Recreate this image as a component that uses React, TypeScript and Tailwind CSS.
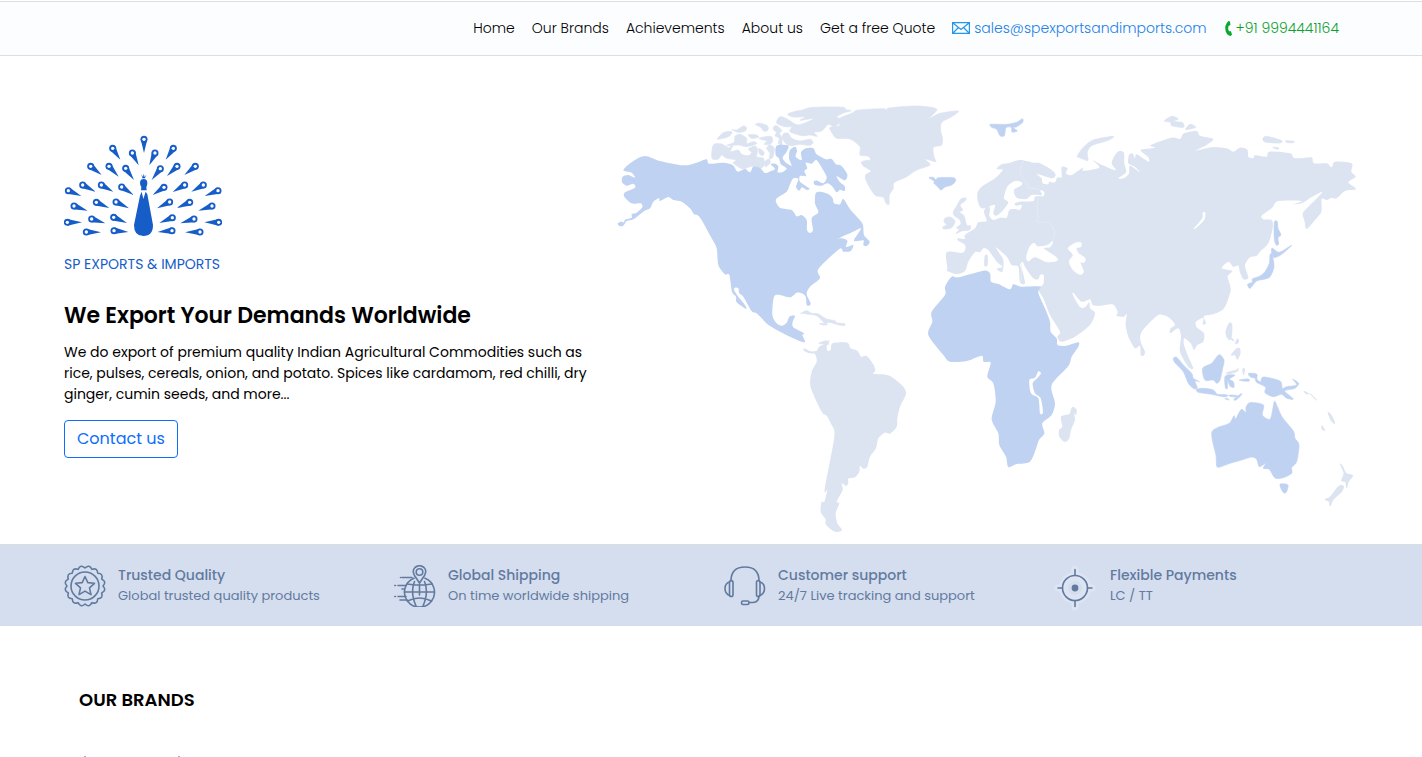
import React from "react";

type Point = [number, number];

const parse = (text: string): Point[] =>
  text
    .trim()
    .split(/\s+/)
    .map((pair) => pair.split(",").map(Number) as Point);

/** Closed Catmull-Rom outline through the given points. */
function outline(text: string, tension = 0.14): string {
  const p = parse(text);
  const n = p.length;
  let d = `M${p[0][0]},${p[0][1]}`;
  for (let i = 0; i < n; i++) {
    const a = p[(i + n - 1) % n];
    const b = p[i];
    const c = p[(i + 1) % n];
    const e = p[(i + 2) % n];
    d += `C${b[0] + (c[0] - a[0]) * tension},${b[1] + (c[1] - a[1]) * tension} ${c[0] - (e[0] - b[0]) * tension},${c[1] - (e[1] - b[1]) * tension} ${c[0]},${c[1]}`;
  }
  return d + "Z";
}

const PALE = "#dce3f1";
const BLUE = "#bfd2f2";

function Land({ fill, shapes, edge = 0 }: { fill: string; shapes: string[]; edge?: number }) {
  return (
    <>
      {shapes.map((s) => (
        <path key={s} d={outline(s)} fill={fill} stroke={fill} strokeWidth={edge} strokeLinejoin="round" />
      ))}
    </>
  );
}

const arctic = [
  "533,57 560,48 575,46 600,38 650,36 700,37 708,44 724,47 700,54 680,66 692,72 688,85 672,95 655,88 635,108 612,112 622,124 600,120 575,122 540,110 545,96 525,95 500,84 510,65 535,74 550,84 565,90 590,82 612,70 570,76 585,66 550,66",
  "310,150 335,147 355,158 368,152 362,170 385,165 395,178 415,182 425,172 415,162 435,153 443,165 440,185 460,190 462,210 450,221 425,214 400,222 380,212 370,203 378,195 350,190 335,180 325,192 306,190",
  "322,132 340,113 365,110 360,122 340,130",
  "365,103 380,105 400,93 410,98 405,108 385,112",
  "375,124 390,118 410,130 410,146 430,140 440,146 410,155 385,150 350,152 372,142",
  "415,119 440,120 445,127 425,130",
  "436,88 450,85 472,92 474,105 462,109 452,97",
  "447,130 482,124 488,137 480,148 462,148 470,138",
  "493,93 505,95 515,108 508,115 516,128 515,150 505,145 508,130 495,122 500,112 490,104",
  "520,116 535,115 545,130 570,138 600,133 609,142 600,151 570,148 545,152 530,148 518,132",
  "470,160 480,150 493,160 488,188 478,190 480,175",
  "447,160 462,172 458,182 448,176",
  "464,200 478,192 480,205 466,215",
  "572,655 590,647 605,655 625,657 650,672 675,677 680,683 703,686 704,691 685,690 660,682 645,684 620,662 595,658 580,655",
  "628,686 645,685 652,689 640,690",
  "755,200 790,195 800,205 772,215 760,212",
  "626,745 650,737 655,748",
];

const northAmerica = [
  "40,225 70,198 105,183 150,198 220,211 260,203 290,193 297,206 340,203 368,210 383,230 405,222 420,232 430,215 450,219 465,234 478,230 495,222 482,208 495,206 505,214 503,232 520,230 530,220 512,207 507,190 497,180 500,152 535,152 530,170 518,188 530,205 545,212 537,190 540,165 556,155 561,168 557,185 575,195 573,172 588,160 610,160 620,178 648,193 665,192 678,208 694,212 712,238 705,256 680,243 690,262 704,274 704,288 690,284 680,292 668,276 653,265 635,272 615,270 611,260 622,257 640,265 650,250 645,235 620,196 605,206 587,203 592,220 583,228 588,243 570,243 570,260 598,280 590,285 576,277 568,287 558,276 565,252 550,250 540,268 530,290 498,313 510,338 545,345 560,364 575,360 590,375 591,405 600,414 609,405 605,370 625,352 615,325 617,295 630,290 655,297 668,310 672,325 690,328 700,312 722,345 757,385 762,420 779,440 770,453 760,450 760,436 732,437 753,400 720,415 690,428 655,447 690,430 712,437 708,456 730,450 722,468 700,470 688,462 625,522 630,550 600,575 590,597 602,625 597,632 590,629 587,605 575,595 560,593 540,607 510,600 492,605 487,660 500,685 515,692 530,683 538,665 555,662 548,680 550,697 582,715 577,720 584,742 540,725 480,693 455,670 440,655 425,648 400,605 388,595 385,580 375,578 372,585 385,605 405,630 408,642 380,622 378,605 366,590 358,540 345,538 325,510 320,460 305,430 275,375 262,360 252,358 240,340 215,320 190,315 175,306 150,318 147,310 130,320 120,340 100,350 70,373 50,378 40,392 28,393 23,385 32,380 42,382 45,374 65,368 65,357 80,353 97,337 92,325 65,325 43,305 45,292 75,278 70,266 50,272 36,262 38,245 55,240 75,248 65,233",
];

const greenland = [
  "90,97 118,92 120,70 155,55 175,45 250,41 262,49 267,39 350,33 410,42 388,70 420,55 475,48 455,65 425,82 422,110 427,125 425,150 400,157 402,185 407,200 375,192 390,210 350,225 320,245 282,263 280,280 268,300 267,328 258,325 250,307 225,300 200,260 197,240 213,228 188,210 213,200 205,184 180,180 180,155 150,132 110,130 95,112",
  "483,312 498,309 495,318 480,330 488,345 478,352 492,362 500,390 512,393 508,405 485,408 468,416 478,402 470,398 483,387 478,373 463,362 460,350 470,333",
  "435,370 450,366 465,378 455,398 432,402 428,396 440,390 432,380",
  "555,483 562,482 562,510 554,512",
];

const northBlue = [
  "387,248 400,247 408,255 415,248 460,248 467,257 455,270 435,276 423,285 413,275 402,265 402,258",
  "572,88 620,88 650,82 667,71 668,82 650,95 640,98 652,108 636,111 634,97 618,98 613,122 600,122 590,103 575,97",
];

const eurasia =
  "-10,222 5,208 30,203 60,195 100,203 120,205 155,225 167,240 155,250 112,237 125,250 128,265 145,268 147,260 165,262 172,247 185,247 185,216 203,220 197,235 215,240 248,218 250,227 298,218 280,197 300,207 347,226 335,205 345,180 358,168 372,173 373,205 378,232 355,250 375,248 387,235 390,212 420,232 405,216 385,205 387,180 397,175 405,190 410,178 445,200 445,187 422,165 465,158 452,150 515,128 540,132 552,115 590,108 600,122 640,132 620,150 588,167 635,157 680,160 700,170 720,158 742,164 745,185 760,190 765,181 800,185 808,170 870,175 880,188 900,190 935,187 942,205 980,205 995,217 1005,200 1055,205 1054,230 1067,245 1045,262 1068,282 1035,288 1010,310 995,308 980,315 965,312 964,350 945,375 920,402 914,380 908,355 925,335 955,305 967,290 935,306 905,325 880,328 905,318 835,318 815,340 785,362 790,373 815,375 818,400 805,445 780,470 770,482 750,487 735,510 740,530 745,550 730,553 720,532 715,512 700,515 685,500 665,520 697,528 683,545 692,585 672,640 640,658 612,664 618,685 608,688 610,668 588,680 590,697 612,715 610,740 592,750 582,765 572,745 553,730 552,750 565,785 580,820 565,815 540,770 543,725 535,700 510,715 512,700 525,690 510,670 490,660 470,663 425,710 422,740 435,770 430,782 422,780 420,752 405,760 385,725 377,690 380,657 372,665 350,662 353,650 338,628 300,632 278,630 270,613 245,620 220,593 220,603 240,636 255,637 268,622 270,640 285,655 270,690 225,725 185,740 172,725 180,710 150,660 130,610 118,590 117,577 130,568 131,540 120,540 115,553 98,548 75,515 68,500 60,510 68,530 75,565 60,562 55,515 35,510 20,485 -12,457 -5,470 10,495 7,530 -10,522 7,515 -10,500 -35,465 -50,460 -60,472 -75,472 -95,500 -105,528 -130,537 -158,528 -158,518 -160,472 -115,474 -105,465 -105,450 -127,436 -125,430 -105,432 -105,420 -75,400 -65,382 -40,378 -48,350 -35,328 -30,345 -32,362 -20,375 0,368 20,368 28,345 45,342 60,345 65,330 48,332 45,325 60,320 100,318 105,305 130,303 132,290 120,285 125,300 95,300 80,312 50,308 42,285 65,270 65,262 45,258 22,275 12,310 25,322 10,345 -10,362 -20,355 -15,330 -35,335 -55,340 -65,325 -68,295 -55,275 -15,250 8,225";

const asiaIslands = [
  "232,183 250,157 280,135 340,124 325,136 275,152 262,172 264,196 250,193 236,187",
  "493,78 515,64 535,72 520,79 548,83 550,97 515,92 512,82",
  "557,104 570,88 587,97",
  "789,130 800,124 843,136 840,144 795,141",
  "857,137 882,139 880,143 862,143",
  "818,157 836,158 832,163",
  "680,705 688,685 695,688 695,720 690,735 680,725",
  "708,742 712,732 716,740",
];

const japan = [
  "823,382 832,380 834,400 843,420 834,428 836,448 828,449 823,430",
  "816,459 838,472 875,451 845,478 823,488 816,478",
  "816,478 822,515 810,545 795,552 770,558 755,575 748,580 743,568 757,562 757,552 780,543 795,530 808,505 810,480",
];

const seas = [
  "80,485 90,455 103,445 112,455 140,452 158,440 150,455 130,460 168,487 170,497 140,500 105,485 85,498",
  "205,460 225,445 242,443 242,455 228,458 235,475 255,490 252,502 240,502 250,530 240,538 220,525 208,500 220,480",
  "582,402 608,370 609,353 615,355 610,377",
];

const africa =
  "485,-160 505,-158 580,-178 600,-170 603,-145 625,-138 660,-122 670,-137 695,-130 750,-130 745,-112 765,-65 780,-25 782,5 800,25 803,45 830,47 865,37 865,50 845,80 835,108 785,165 795,220 785,255 757,280 763,310 747,330 740,350 720,395 680,402 655,411 648,380 628,345 625,310 605,268 617,215 610,160 592,140 602,98 581,95 575,77 530,93 480,95 460,75 415,15 427,-25 425,-55 465,-105 465,-130";

const lakes = "745,124 753,130 742,145 728,160 735,190 752,205 759,247 750,250 745,205 723,190 718,150 735,143";

const southPale = [
  "42,62 43,55 62,64 80,62 87,50 100,44 119,30 110,50 113,62 122,60 128,40 172,38 182,55 203,63 213,80 230,78 250,103 256,122 250,131 295,136 335,165 348,185 345,200 330,230 322,265 320,290 300,311 285,308 265,325 258,355 240,380 232,410 220,416 210,407 208,425 195,442 175,446 175,460 168,468 155,460 158,480 140,515 148,520 137,550 142,580 156,600 140,606 125,600 107,582 107,568 92,545 95,515 103,515 112,480 104,478 133,320 125,285 110,257 95,245 62,172 65,125 80,95 75,72 60,70",
  "843,237 850,230 860,240 858,255 852,250 855,270 843,300 838,325 825,336 808,320 807,300 817,290 813,260 838,252",
];

const oceaniaBlue = [
  "160,175 170,172 190,195 215,220 220,235 238,245 225,243 232,265 220,265 205,250 190,215 165,188",
  "230,268 250,265 280,270 292,283 315,284 325,287 310,290 275,283 235,277",
  "248,205 275,190 297,164 312,180 308,205 300,240 290,250 280,240 255,240",
  "316,228 345,225 328,238 340,245 342,262 330,258 323,240 322,265 316,262",
  "318,294 328,300 316,297",
  "330,285 352,287 345,291 330,289",
  "342,298 362,282 365,284 348,300",
  "386,220 410,222 411,238 422,245 430,231 480,243 487,265 500,260 530,255 518,238 536,250 525,265 500,270 495,275 520,297 500,295 485,283 460,290 435,278 437,262 415,250 408,245 405,235 390,230",
  "358,240 384,237 388,243 370,243",
  "276,395 295,382 328,370 342,347 347,357 364,328 378,338 378,322 390,308 430,315 427,345 451,357 463,305 472,320 487,352 520,393 525,415 537,435 530,485 515,503 515,520 490,533 465,534 448,508 430,505 437,490 418,500 410,478 395,471 365,480 330,490 300,501 290,498 288,465 278,425",
  "480,553 504,555 498,578 488,575",
];

const oceaniaPale = [
  "318,95 328,70 335,75 333,105 322,108",
  "335,115 342,122 335,120",
  "345,130 355,118 353,130",
  "334,165 348,148 358,145 360,160 352,178 346,165",
  "320,218 350,210 354,205 352,214 325,222",
  "368,208 373,206 371,225",
  "552,274 566,281 558,281",
  "570,281 590,300 580,291",
  "624,337 634,346 644,370 634,362",
  "606,377 614,391 606,387",
  "661,492 668,500 678,520 698,527 685,545 680,563 677,545 665,542 672,520",
  "615,598 630,592 655,560 670,558 665,575 640,598 630,618 628,605",
];

function WorldMap() {
  return (
    <svg viewBox="613 80 746 460" className="block h-auto w-full" role="img" aria-label="World map of export regions">
      <g transform="translate(610 95) scale(.33333)">
        <Land fill={PALE} shapes={arctic} edge={2} />
        <Land fill={BLUE} shapes={northAmerica} />
      </g>
      <g transform="translate(800 95) scale(.33333)">
        <Land fill={PALE} shapes={greenland} edge={2} />
        <Land fill={BLUE} shapes={northBlue} edge={2} />
      </g>
      <g transform="translate(1000 95) scale(.33333)">
        <Land fill={PALE} shapes={[eurasia]} />
        <Land fill={PALE} shapes={asiaIslands} edge={2} />
        <Land fill={BLUE} shapes={japan} edge={2} />
        <Land fill="#ffffff" shapes={seas} edge={3} />
        <path
          d="M72 197Q50 225 68 250L83 266V280H108L122 286M115 308Q108 345 115 365L110 381H132Q165 385 164 420Q160 438 145 450M64 500V560"
          fill="none"
          stroke="#e8eef7"
          strokeWidth="2"
        />
      </g>
      <g transform="translate(790 330) scale(.33333)">
        <Land fill={BLUE} shapes={[africa]} />
        <Land fill="#ffffff" shapes={[lakes]} />
        <Land fill={PALE} shapes={southPale} />
      </g>
      <g transform="translate(1120 300) scale(.33333)">
        <Land fill={BLUE} shapes={oceaniaBlue} edge={2} />
        <Land fill={PALE} shapes={oceaniaPale} edge={3} />
      </g>
    </svg>
  );
}

/** Feather eye (x, y) and quill tip (x, y). */
const feathers: number[][] = [
  [282, 43, 282, 84], [188, 70, 211, 104], [370, 70, 347, 104], [247, 84, 266, 121], [315, 84, 298, 121],
  [122, 124, 155, 150], [177, 124, 206, 155], [227, 130, 252, 165], [331, 131, 305, 165], [381, 124, 351, 153],
  [436, 124, 403, 150], [98, 180, 137, 200], [154, 180, 190, 200], [215, 186, 251, 210], [342, 187, 308, 210],
  [404, 180, 368, 201], [460, 180, 424, 200], [55, 197, 94, 213], [504, 197, 464, 213], [72, 243, 113, 257],
  [139, 232, 178, 249], [198, 231, 237, 250], [359, 231, 321, 250], [419, 232, 380, 249], [486, 243, 445, 257],
  [52, 292, 96, 292], [125, 282, 166, 295], [191, 277, 231, 294], [367, 278, 328, 294], [432, 282, 391, 295],
  [506, 292, 463, 292], [109, 321, 153, 322], [192, 317, 235, 321], [366, 317, 323, 321], [450, 321, 405, 322],
];

function Peacock() {
  return (
    <svg viewBox="42 30 474 306" className="block h-[102px] w-[158px]" fill="#165dc8" aria-hidden="true">
      {feathers.map(([x, y, tx, ty]) => {
        const len = Math.hypot(tx - x, ty - y);
        const nx = (-(ty - y) / len) * 10;
        const ny = ((tx - x) / len) * 10;
        return (
          <g key={`${x}-${y}`}>
            <path d={`M${x + nx} ${y + ny}L${tx} ${ty}L${x - nx} ${y - ny}Z`} />
            <circle cx={x} cy={y} r="10.5" />
            <circle cx={x} cy={y} r="5" fill="#fff" />
          </g>
        );
      })}
      <path d="M270 174Q270 162 281 162Q292 162 292 174Q292 182 289 186L290 196H273L274 186Q270 181 270 174Z" />
      <path d="M274 148L279 157L281 146L284 157L289 148L285 160H277Z" />
      <path d="M275 200L280 222L287 200L292 208L309 300Q309 333 280 333Q252 333 252 300L270 212Z" />
    </svg>
  );
}

const iconProps = {
  fill: "none",
  stroke: "#627a9f",
  strokeWidth: 1.6,
  strokeLinecap: "round" as const,
  strokeLinejoin: "round" as const,
  "aria-hidden": true,
};

function BadgeIcon() {
  const lobes = 16;
  let d = "";
  for (let i = 0; i < lobes; i++) {
    const a = (i * 2 * Math.PI) / lobes - Math.PI / 2;
    const b = ((i + 1) * 2 * Math.PI) / lobes - Math.PI / 2;
    const m = (a + b) / 2;
    if (i === 0) d = `M${21 + 18 * Math.cos(a)} ${21 + 18 * Math.sin(a)}`;
    d += `Q${21 + 22.5 * Math.cos(m)} ${21 + 22.5 * Math.sin(m)} ${21 + 18 * Math.cos(b)} ${21 + 18 * Math.sin(b)}`;
  }
  return (
    <svg viewBox="0 0 42 42" className="size-[42px] shrink-0" {...iconProps}>
      <path d={d} />
      <circle cx="21" cy="21" r="14" />
      <path d="M21 11.5L23.8 17.6L30.5 18.3L25.5 22.8L27 29.6L21 26.1L15 29.6L16.5 22.8L11.5 18.3L18.2 17.6Z" />
    </svg>
  );
}

function GlobeIcon() {
  return (
    <svg viewBox="0 0 42 42" className="size-[42px] shrink-0" {...iconProps}>
      <path d="M20 13.2A15 15 0 1 0 31 13.2" />
      <path d="M10.5 27H40M13 19Q25.500 21 38 19M13.500 36Q25.500 30 37.500 36M25.500 19V30M20.500 16.500Q16 27 22 41M30.500 16.500Q35 27 29 41" />
      <path d="M25.500 18L20.500 10.500Q17.800 5.500 21 2.500Q25.500-1 30 2.500Q33.200 5.500 30.500 10.500Z" fill="#d5deee" />
      <circle cx="25.500" cy="7" r="3.300" />
      <path d="M8 12.500H18M6.500 12.500H6.600M4 20.500H12M.800 20.500H1.500M8 24H10M4 31.500H12M.800 31.500H1.500M6 35H13" />
    </svg>
  );
}

function HeadsetIcon() {
  return (
    <svg viewBox="0 0 42 42" className="size-[42px] shrink-0" {...iconProps}>
      <path d="M7 16Q7 2 21 2Q35 2 35 16M35 31Q35 37 29 37.500H25" />
      <rect x="5.500" y="15.500" width="3.500" height="16" rx="1.750" />
      <rect x="32.500" y="15.500" width="3.500" height="16" rx="1.750" />
      <path d="M5.500 17Q1 18.500 1 23.500Q1 28.500 5.500 30.500M36 17Q40.500 18.500 40.500 23.500Q40.500 28.500 36 30.500" />
      <rect x="17.500" y="36" width="7.500" height="3.500" rx="1.500" />
    </svg>
  );
}

function TargetIcon() {
  return (
    <svg viewBox="0 0 44 46" className="h-[46px] w-11 shrink-0" {...iconProps}>
      <g stroke="#dde5f3" strokeWidth="7">
        <path d="M21 4V11M21 35V42M4 23H9M33 23H38" />
        <circle cx="21" cy="23" r="12.500" />
      </g>
      <circle cx="21" cy="23" r="8" stroke="#dde5f3" />
      <circle cx="21" cy="23" r="12.500" />
      <path d="M21 4.500V10M21 36V41.500M4 23H8.500M33.500 23H38" />
      <circle cx="21" cy="23" r="3.400" fill="#627a9f" stroke="none" />
    </svg>
  );
}

const features = [
  { Icon: BadgeIcon, title: "Trusted Quality", text: "Global trusted quality products" },
  { Icon: GlobeIcon, title: "Global Shipping", text: "On time worldwide shipping" },
  { Icon: HeadsetIcon, title: "Customer support", text: "24/7 Live tracking and support" },
  { Icon: TargetIcon, title: "Flexible Payments", text: "LC / TT" },
];

export default function App() {
  return (
    <div className="bg-white font-[Poppins,Inter,sans-serif] text-black">
      <header className="mt-px border-y border-[#dcdfe2] bg-[#fcfdff]">
        <nav className="mx-auto flex max-w-[1320px] items-center justify-end gap-[17px] pt-4 pr-8 pb-[17px] text-sm font-light whitespace-nowrap">
          <a href="#home">Home</a>
          <a href="#brands">Our Brands</a>
          <a href="#achievements">Achievements</a>
          <a href="#about">About us</a>
          <a href="#quote">Get a free Quote</a>
          <a href="mailto:sales@spexportsandimports.com" className="flex items-center gap-1 text-[#1c82e4]">
            <svg viewBox="0 0 18 12" className="h-3 w-[18px]" fill="none" stroke="#2397ec" strokeWidth="1.2" aria-hidden="true">
              <path d="M.6.6H17.400V11.400H.6ZM1 1L9 7.500L17 1M1 11L6.500 5.500M17 11L11.500 5.500" />
            </svg>
            sales@spexportsandimports.com
          </a>
          <a href="tel:+919994441164" className="flex items-center gap-1 text-[#0c9f2c]">
            <svg viewBox="0 0 8 15" className="h-[15px] w-2" fill="#0ca72f" aria-hidden="true">
              <path d="M4.500 0L6 .4L6.400 4L4.500 5Q3.600 7.500 5 10.300L7 10.300L8 13.800L6.500 15Q3.300 14.500 1.700 10.500Q0 4 4.500 0Z" />
            </svg>
            +91 9994441164
          </a>
        </nav>
      </header>

      <main>
        <section className="mx-auto grid max-w-[1320px] grid-cols-12 pt-6 pb-1">
          <div className="col-span-5 pt-[55px] pr-3 pl-[13px]">
            <Peacock />
            <p className="mt-[15px] text-sm leading-6 text-[#165dc8]">SP EXPORTS &amp; IMPORTS</p>
            <h1 className="mt-6 text-[22px] leading-8 font-semibold">We Export Your Demands Worldwide</h1>
            <p className="mt-[10px] text-sm leading-[21px]">
              We do export of premium quality Indian Agricultural Commodities such as rice, pulses, cereals, onion, and
              potato. Spices like cardamom, red chilli, dry ginger, cumin seeds, and more...
            </p>
            <button type="button" className="mt-[15px] h-[38px] rounded border border-[#0d6efd] px-3 text-base text-[#0d6efd]">
              Contact us
            </button>
          </div>
          <div className="col-span-7 px-3">
            <WorldMap />
          </div>
        </section>

        <section className="border-t border-[#dcdfe2] bg-[#d5deee] text-[#627a9f]">
          <div className="mx-auto grid h-[81px] max-w-[1320px] grid-cols-4 pt-5">
            {features.map(({ Icon, title, text }) => (
              <div key={title} className="flex items-start gap-3 pr-3 pl-[13px]">
                <Icon />
                <div>
                  <h2 className="text-sm leading-5 font-medium">{title}</h2>
                  <p className="text-[13px] leading-[21px]">{text}</p>
                </div>
              </div>
            ))}
          </div>
        </section>

        <section id="brands" className="mx-auto max-w-[1320px] px-7 pt-[60px]">
          <h2 className="text-lg leading-7 font-semibold">OUR BRANDS</h2>
          <svg viewBox="0 0 110 1" className="mt-[42px] block h-px w-[110px]" fill="#a9a9c4" aria-hidden="true">
            <path d="M5 0H7V1H5ZM99 0H101V1H99Z" />
          </svg>
        </section>
      </main>
    </div>
  );
}
